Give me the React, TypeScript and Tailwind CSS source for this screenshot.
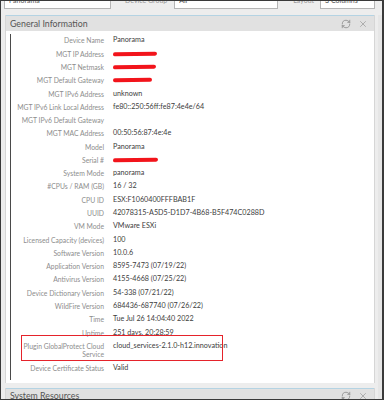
import React from 'react';
import { RefreshCw, X, ChevronDown } from 'lucide-react';

type Row = { label: string; value?: string; redact?: number; wrap?: boolean; marked?: boolean };

const rows: Row[] = [
  { label: 'Device Name', value: 'Panorama' },
  { label: 'MGT IP Address', redact: 44 },
  { label: 'MGT Netmask', redact: 43 },
  { label: 'MGT Default Gateway', redact: 39 },
  { label: 'MGT IPv6 Address', value: 'unknown' },
  { label: 'MGT IPv6 Link Local Address', value: 'fe80::250:56ff:fe87:4e4e/64' },
  { label: 'MGT IPv6 Default Gateway', value: '' },
  { label: 'MGT MAC Address', value: '00:50:56:87:4e:4e' },
  { label: 'Model', value: 'Panorama' },
  { label: 'Serial #', redact: 45 },
  { label: 'System Mode', value: 'panorama' },
  { label: '#CPUs / RAM (GB)', value: '16 / 32' },
  { label: 'CPU ID', value: 'ESX:F1060400FFFBAB1F' },
  { label: 'UUID', value: '42078315-A5D5-D1D7-4B68-B5F474C0288D' },
  { label: 'VM Mode', value: 'VMware ESXi' },
  { label: 'Licensed Capacity (devices)', value: '100' },
  { label: 'Software Version', value: '10.0.6' },
  { label: 'Application Version', value: '8595-7473 (07/19/22)' },
  { label: 'Antivirus Version', value: '4155-4668 (07/25/22)' },
  { label: 'Device Dictionary Version', value: '54-338 (07/21/22)' },
  { label: 'WildFire Version', value: '684436-687740 (07/26/22)' },
  { label: 'Time', value: 'Tue Jul 26 14:04:40 2022' },
  { label: 'Uptime', value: '251 days, 20:28:59' },
  { label: 'Plugin GlobalProtect Cloud Service', value: 'cloud_services-2.1.0-h12.innovation', wrap: true, marked: true },
  { label: 'Device Certificate Status', value: 'Valid' },
];

const SelectBox = ({ text, width }: { text: string; width: string }) => (
  <div className={`${width} h-[18px] bg-white border border-[#b5b5b5] flex items-center justify-between px-[4px] text-[7px] text-[#555] whitespace-nowrap`}>
    <span>{text}</span>
    <ChevronDown size={8} strokeWidth={1.5} className="text-[#777] shrink-0" />
  </div>
);

const PanelHeader = ({ title }: { title: string }) => (
  <div className="h-[16px] bg-[#e1e1e1] border-t-[1.5px] border-[#b4d3e3] flex items-center justify-between pl-[4px] pr-[6px]">
    <span className="text-[8.8px] text-[#555]">{title}</span>
    <div className="flex items-center gap-[7px] text-[#7a7a7a]">
      <RefreshCw size={10} strokeWidth={1.6} />
      <X size={10} strokeWidth={1.2} />
    </div>
  </div>
);

export default function App() {
  return (
    <div
      className="w-[384px] h-[400px] overflow-hidden bg-[#ededed] border-t border-l border-r-2 border-b border-[#3a3a3a] flex flex-col"
      style={{ fontFamily: 'Lato, "Open Sans", sans-serif' }}
    >
      {/* top filter bar, cut off */}
      <div className="h-[8px] overflow-hidden flex items-end pl-[3px] shrink-0 whitespace-nowrap">
        <SelectBox text="Panorama" width="w-[107px]" />
        <span className="ml-[14px] mr-[7px] text-[7px] text-[#999] leading-[18px] h-[18px]">Device Group</span>
        <SelectBox text="All" width="w-[104px]" />
        <span className="ml-[15px] mr-[6px] text-[7px] text-[#999] leading-[18px] h-[18px]">Layout</span>
        <SelectBox text="3 Columns" width="w-[55px]" />
      </div>

      <div className="flex mt-[6px] flex-1 min-h-0">
        <div className="flex flex-col w-[371px] ml-[4px]">
          {/* General Information panel */}
          <div className="border-x border-[#d6d6d6] bg-white flex flex-col">
            <PanelHeader title="General Information" />
            <div className="pt-[3px] pb-[3px] pl-[4px]">
              <div className="border-l-[1.5px] border-[#4a4a4a] pb-[5px]">
                {rows.map((r) => (
                  <div key={r.label} className="relative flex py-[2.4px] leading-[8.5px] text-[6.8px]">
                    <div className={`w-[93px] shrink-0 text-right text-[#8d8d8d] ${r.wrap ? '' : 'whitespace-nowrap'}`}>
                      {r.wrap ? (
                        <>
                          Plugin GlobalProtect Cloud
                          <br />
                          Service
                        </>
                      ) : (
                        r.label
                      )}
                    </div>
                    <div className="ml-[9px] text-[7.2px] text-[#3d3d3d] whitespace-nowrap">
                      {r.redact ? (
                        <div
                          className="mt-[2px] h-[4px] bg-[#f2141b] rounded-[3px] -rotate-1"
                          style={{ width: r.redact }}
                        />
                      ) : (
                        r.value
                      )}
                    </div>
                    {r.marked && (
                      <div className="absolute left-[10px] top-[-4px] w-[202px] h-[26px] border-[1.5px] border-[#e5232b]" />
                    )}
                  </div>
                ))}
              </div>
            </div>
          </div>

          {/* next panel, cut off */}
          <div className="mt-[5px] border-x border-[#d6d6d6] bg-white">
            <PanelHeader title="System Resources" />
          </div>
        </div>
        <div className="ml-[3px] w-[4px] bg-[#e6e6e6]" />
      </div>
    </div>
  );
}
